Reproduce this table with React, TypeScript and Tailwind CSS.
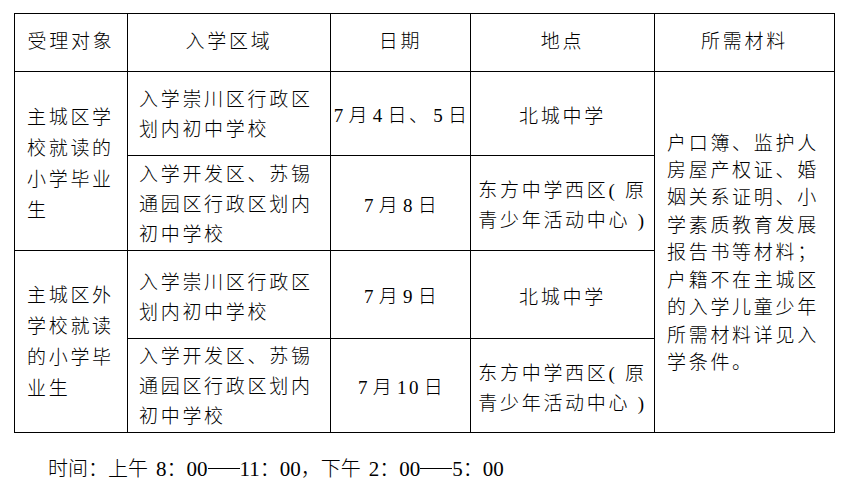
import React from "react";

const font = { fontFamily: '"Liberation Serif", "Noto Sans CJK SC", serif' };

function Lines({ lines }: { lines: React.ReactNode[] }) {
  return (
    <>
      {lines.map((l, i) => (
        <div key={i}>{l}</div>
      ))}
    </>
  );
}

function D({ children }: { children: React.ReactNode }) {
  return <span className="mx-[2.5px]">{children}</span>;
}

function Dash() {
  return <span className="inline-block w-[32px] h-[1px] bg-black align-[7px]" />;
}

export default function App() {
  const cell = "border border-black align-middle";
  const hd = "border border-black text-center align-middle font-light";
  const date = `${cell} px-0 pt-[6px] text-center whitespace-nowrap tracking-[2.7px]`;
  const loc = `${cell} px-0 pt-[6px] text-center leading-[30px]`;
  return (
    <div
      className="bg-white w-[846px] h-[493px] pt-[13px] pl-[14px] text-black text-[19px] tracking-[2.7px] font-light"
      style={font}
    >
      <table className="table-fixed border-collapse w-[820px]">
        <colgroup>
          <col className="w-[113px]" />
          <col className="w-[203px]" />
          <col className="w-[140px]" />
          <col className="w-[184px]" />
          <col className="w-[180px]" />
        </colgroup>
        <thead>
          <tr className="h-[58px]">
            <th className={hd}>受理对象</th>
            <th className={hd}>入学区域</th>
            <th className={hd}>日期</th>
            <th className={hd}>地点</th>
            <th className={hd}>所需材料</th>
          </tr>
        </thead>
        <tbody>
          <tr className="h-[84px]">
            <td rowSpan={2} className={`${cell} pl-[12px] pr-0 leading-[31px] pt-[5px]`}>
              <Lines lines={["主城区学", "校就读的", "小学毕业", "生"]} />
            </td>
            <td className={`${cell} pl-[11px] leading-[30px] pt-[3px]`}>
              <Lines lines={["入学崇川区行政区", "划内初中学校"]} />
            </td>
            <td className={date}>
              <D>7</D>月<D>4</D>日、<D>5</D>日
            </td>
            <td className={loc}>北城中学</td>
            <td rowSpan={4} className={`${cell} pl-[12px] pr-0 leading-[27.4px] pt-[2px]`}>
              <Lines
                lines={[
                  "户口簿、监护人",
                  "房屋产权证、婚",
                  "姻关系证明、小",
                  "学素质教育发展",
                  "报告书等材料；",
                  "户籍不在主城区",
                  "的入学儿童少年",
                  "所需材料详见入",
                  "学条件。",
                ]}
              />
            </td>
          </tr>
          <tr className="h-[95px]">
            <td className={`${cell} pl-[11px] leading-[30px] pt-[4px]`}>
              <Lines lines={["入学开发区、苏锡", "通园区行政区划内", "初中学校"]} />
            </td>
            <td className={date}>
              <D>7</D>月<D>8</D>日
            </td>
            <td className={loc}>
              <Lines lines={["东方中学西区( 原", "青少年活动中心 )"]} />
            </td>
          </tr>
          <tr className="h-[88px]">
            <td rowSpan={2} className={`${cell} pl-[12px] pr-0 leading-[31px]`}>
              <Lines lines={["主城区外", "学校就读", "的小学毕", "业生"]} />
            </td>
            <td className={`${cell} pl-[11px] leading-[30px] pt-[6px]`}>
              <Lines lines={["入学崇川区行政区", "划内初中学校"]} />
            </td>
            <td className={date}>
              <D>7</D>月<D>9</D>日
            </td>
            <td className={loc}>北城中学</td>
          </tr>
          <tr className="h-[94px]">
            <td className={`${cell} pl-[11px] leading-[30px] pt-[3px]`}>
              <Lines lines={["入学开发区、苏锡", "通园区行政区划内", "初中学校"]} />
            </td>
            <td className={date}>
              <D>7</D>月<D>10</D>日
            </td>
            <td className={loc}>
              <Lines lines={["东方中学西区( 原", "青少年活动中心 )"]} />
            </td>
          </tr>
        </tbody>
      </table>
      <div className="mt-[21px] pl-[34px] text-[20px] leading-[30px] tracking-normal whitespace-nowrap">
        时间：上午<span className="text-[21px] ml-[8px]">8</span>：<span className="text-[21px]">00</span>
        <Dash />
        <span className="text-[21px]">11</span>：<span className="text-[21px]">00</span>，下午
        <span className="text-[21px] ml-[8px]">2</span>：<span className="text-[21px]">00</span>
        <Dash />
        <span className="text-[21px]">5</span>：<span className="text-[21px]">00</span>
      </div>
    </div>
  );
}
